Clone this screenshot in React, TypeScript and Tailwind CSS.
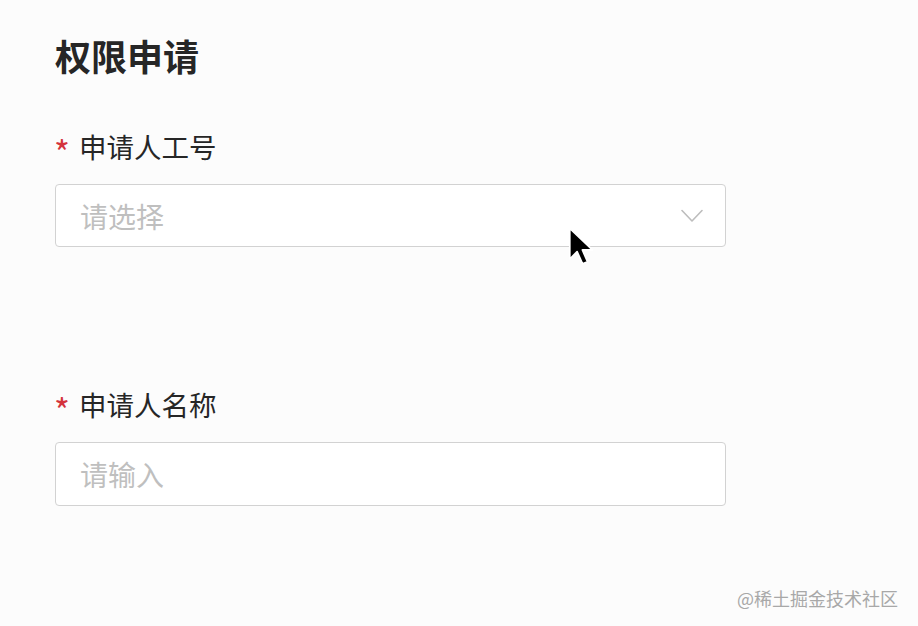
const font = { fontFamily: '"Noto Sans CJK SC", "Noto Sans", sans-serif' };

function Label({ text }: { text: string }) {
  return (
    <div className="flex items-center h-[36px] text-[27.5px] leading-[36px] text-[#262626]">
      <span className="text-[#d4333c] w-[25px] text-[34px] leading-[36px] pt-[12px] -ml-[1px]">*</span>
      <span>{text}</span>
    </div>
  );
}

function Chevron() {
  return (
    <svg width="22" height="14" viewBox="0 0 22 14" fill="none">
      <path d="M1 1.5 L11 12 L21 1.5" stroke="#bdbdbd" strokeWidth="1.6" strokeLinecap="round" strokeLinejoin="round" />
    </svg>
  );
}

function Cursor() {
  return (
    <svg width="30" height="44" viewBox="0 0 24 36" className="absolute left-[567px] top-[226px]">
      <path
        d="M2 2 L2 27 L8 21 L12.5 31 L16.5 29.2 L12.3 19.6 L20.5 19.6 Z"
        fill="#000"
        stroke="#fff"
        strokeWidth="1.4"
        strokeLinejoin="round"
      />
    </svg>
  );
}

export default function App() {
  return (
    <div className="relative w-[918px] h-[626px] bg-[#fcfcfc] overflow-hidden" style={font}>
      <div className="flex flex-col pl-[55px] pt-[34px] w-[726px]">
        <h1 className="text-[36px] leading-[42px] font-bold text-[#262626]">权限申请</h1>

        <div className="mt-[52px]">
          <Label text="申请人工号" />
        </div>
        <div className="mt-[20px] h-[63px] w-[671px] rounded-[4px] border-[1.5px] border-[#d2d2d2] bg-white flex items-center justify-between pl-[24px] pr-[22px]">
          <span className="text-[28px] text-[#bfbfbf]">请选择</span>
          <Chevron />
        </div>

        <div className="mt-[139px]">
          <Label text="申请人名称" />
        </div>
        <div className="mt-[20px] h-[64px] w-[671px] rounded-[4px] border-[1.5px] border-[#d2d2d2] bg-white flex items-center pl-[24px]">
          <span className="text-[28px] text-[#bfbfbf]">请输入</span>
        </div>
      </div>

      <Cursor />

      <div className="absolute right-[20px] bottom-[16px] text-[18px] leading-[24px] text-[#a8a8a8]">
        @稀土掘金技术社区
      </div>
    </div>
  );
}
